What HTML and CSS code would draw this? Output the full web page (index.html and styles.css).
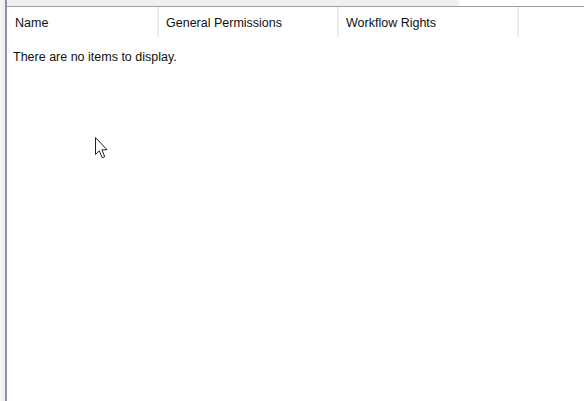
FILE: index.html
```html
<!DOCTYPE html>
<html lang="en">

<head>
  <meta charset="UTF-8" />
  <title>Permissions</title>
  <link rel="stylesheet" href="styles.css">
</head>

<body>
  <div class="topstrip"></div>
  <div class="frame">
    <div class="gutter"></div>
    <div class="list">
      <div class="header">
        <div class="col col-name">Name</div>
        <div class="col col-perm">General Permissions</div>
        <div class="col col-flow">Workflow Rights</div>
        <div class="col col-rest"></div>
      </div>
      <div class="empty">There are no items to display.</div>
      <svg class="cursor" width="15" height="24" viewBox="0 0 15 24">
        <path d="M1.5 1.5 L1.5 18.5 L5.3 14.8 L8.3 21.8 L10.8 20.7 L7.9 13.8 L13 13.8 Z" fill="#fff" stroke="#222" stroke-width="1" stroke-linejoin="miter" />
      </svg>
    </div>
  </div>
</body>

</html>
```

FILE: styles.css
```css
html,
body {
  margin: 0;
  height: 100%;
  background-color: white;
  font-family: "Liberation Sans", Arial, sans-serif;
  font-size: 12.5px;
  color: #111;
  overflow: hidden;
}

.topstrip {
  width: 459px;
  height: 6px;
  background-color: #f0f0f0;
}

.frame {
  display: flex;
  height: 395px;
  border-top: 1px solid #a0a0a0;
}

.gutter {
  width: 3px;
  background-color: #f0f0f0;
  border-left: 2px solid #f4f4f8;
  border-right: 2px solid #8e8ea4;
  margin-top: -7px;
}

.list {
  position: relative;
  flex: 1;
  background-color: white;
}

.header {
  display: flex;
  height: 30px;
  align-items: stretch;
}

.col {
  box-sizing: border-box;
  border-right: 2px solid #ececec;
  padding: 3px 0 0 7px;
  line-height: 27px;
  white-space: nowrap;
}

.col-name {
  width: 152px;
  padding-left: 8px;
}

.col-perm {
  width: 180px;
}

.col-flow {
  width: 180px;
}

.col-rest {
  flex: 1;
  border-right: none;
}

.empty {
  padding: 13px 0 0 6px;
}

.cursor {
  position: absolute;
  left: 87px;
  top: 129px;
}
```
